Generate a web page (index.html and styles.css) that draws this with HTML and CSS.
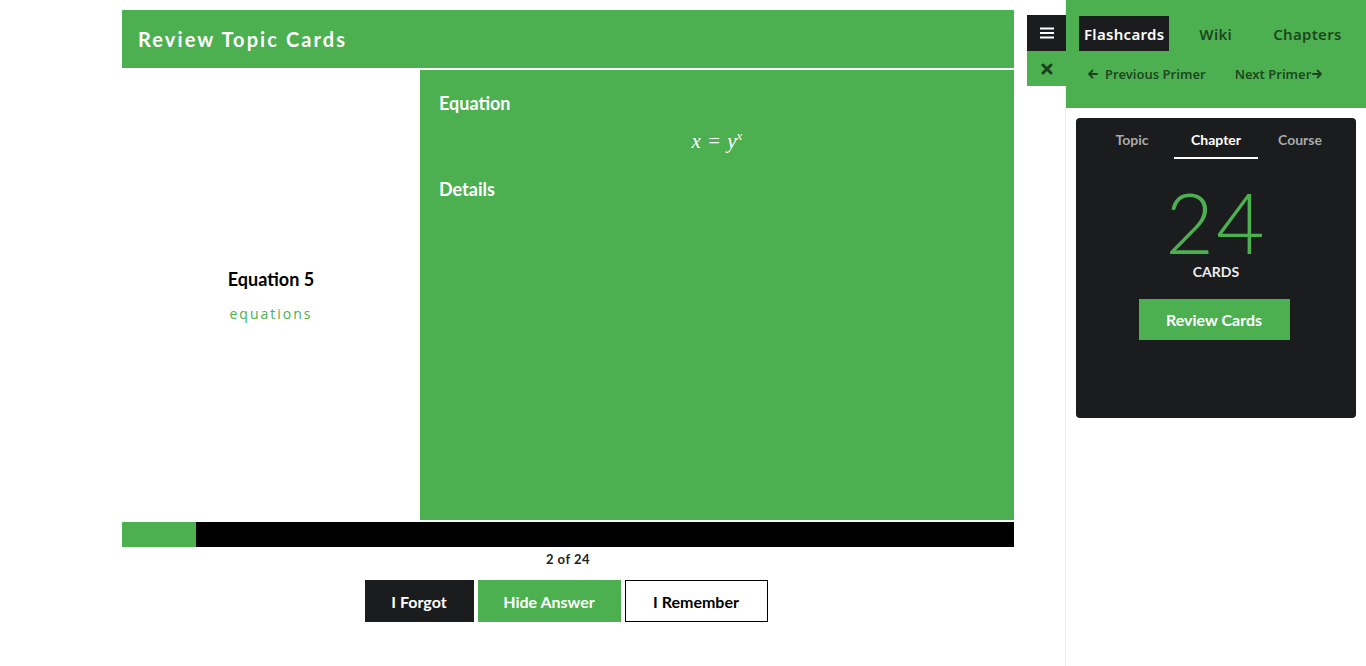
FILE: index.html
```html
<!DOCTYPE html>
<html>
<head>
<meta charset="utf-8">
<link rel="stylesheet" href="styles.css">
</head>
<body>
<div class="page">
  <main class="main">
    <div class="header"><h1>Review Topic Cards</h1></div>
    <div class="card">
      <div class="front">
        <div class="card-title">Equation 5</div>
        <div class="card-tag">equations</div>
      </div>
      <div class="back">
        <div class="label">Equation</div>
        <div class="math"><i>x</i> = <i>y</i><sup><i>x</i></sup></div>
        <div class="label details">Details</div>
      </div>
    </div>
    <div class="progress"><div class="fill" style="width:8.33%"></div></div>
    <div class="count">2 of 24</div>
    <div class="actions">
      <button class="btn dark">I Forgot</button>
      <button class="btn green">Hide Answer</button>
      <button class="btn outline">I Remember</button>
    </div>
  </main>
  <aside class="sidebar">
    <div class="toggles">
      <div class="tg menu"><svg width="14" height="12" viewBox="0 0 14 12"><rect x="0" y="0.5" width="14" height="2" fill="#fff"/><rect x="0" y="5" width="14" height="2" fill="#fff"/><rect x="0" y="9.5" width="14" height="2" fill="#fff"/></svg></div>
      <div class="tg close"><svg width="12" height="12" viewBox="0 0 12 12"><path d="M2 2 L10 10 M10 2 L2 10" stroke="#1e3f1f" stroke-width="3" stroke-linecap="round"/></svg></div>
    </div>
    <div class="side-head">
      <nav class="tabs">
        <span class="tab active">Flashcards</span>
        <span class="tab">Wiki</span>
        <span class="tab">Chapters</span>
      </nav>
      <div class="primers">
        <span class="primer"><svg class="arr" width="11" height="10" viewBox="0 0 11 10"><path d="M10 5 H2 M5.5 1.5 L2 5 L5.5 8.5" fill="none" stroke="currentColor" stroke-width="1.8" stroke-linecap="round" stroke-linejoin="round"/></svg>Previous Primer</span>
        <span class="primer">Next Primer<svg class="arr r" width="11" height="10" viewBox="0 0 11 10"><path d="M1 5 H9 M5.5 1.5 L9 5 L5.5 8.5" fill="none" stroke="currentColor" stroke-width="1.8" stroke-linecap="round" stroke-linejoin="round"/></svg></span>
      </div>
    </div>
    <div class="panel">
      <div class="ptabs">
        <span class="ptab">Topic</span>
        <span class="ptab active">Chapter</span>
        <span class="ptab">Course</span>
      </div>
      <div class="big">24</div>
      <div class="cards-label">CARDS</div>
      <button class="review">Review Cards</button>
    </div>
  </aside>
</div>
</body>
</html>
```
FILE: styles.css
```css
* { box-sizing: border-box; }
html, body { margin: 0; padding: 0; background: #fff; }
body { font-family: "Lato", "Noto Sans", sans-serif; color: #000; }
.page { display: flex; height: 666px; overflow: hidden; }
.main { width: 1065px; padding: 10px 51px 0 122px; }
.header { background: #4caf50; height: 58px; display: flex; align-items: center; padding-left: 16px; }
.header h1 { margin: 0; color: #fff; font-size: 20px; font-weight: 700; letter-spacing: 2.1px; }
.card { display: flex; height: 450px; margin-top: 2px; }
.front { width: 298px; display: flex; flex-direction: column; align-items: center; justify-content: center; }
.card-title { font-size: 18px; font-weight: 700; }
.card-tag { font-family: "Open Sans", sans-serif; font-size: 14px; color: #4caf50; letter-spacing: 2px; margin-top: 14px; }
.back { flex: 1; background: #4caf50; color: #fff; padding: 22px 19px; }
.label { font-size: 18px; font-weight: 700; }
.math { text-align: center; font-family: "Liberation Serif", serif; font-size: 21px; margin-top: 14px; word-spacing: 2px; }
.math sup { font-size: 13px; }
.details { margin-top: 24px; }
.progress { height: 25px; background: #000; margin-top: 2px; }
.fill { height: 100%; background: #4caf50; }
.count { text-align: center; font-size: 13px; font-weight: 700; margin-top: 4px; color: #222; letter-spacing: 0.5px; }
.actions { display: flex; justify-content: center; gap: 4px; margin-top: 13px; padding-right: 4px; }
.btn { font-family: "Lato", sans-serif; font-size: 16px; font-weight: 700; height: 42px; border: 0; padding: 0 20px; }
.btn.dark { background: #1b1c1e; color: #fff; width: 109px; }
.btn.green { background: #4caf50; color: #fff; width: 143px; }
.btn.outline { background: #fff; color: #000; border: 1px solid #000; width: 143px; }
.sidebar { width: 301px; position: relative; border-left: 1px solid #eee; }
.toggles { position: absolute; left: -39px; top: 15px; width: 39px; }
.tg { height: 36px; display: flex; align-items: center; justify-content: center; }
.tg.menu { background: #1b1c1e; }
.tg.close { background: #4caf50; height: 35px; }
.side-head { background: #4caf50; height: 108px; padding: 16px 0 0 13px; }
.tabs { display: flex; align-items: center; }
.tab { font-family: "Noto Sans", sans-serif; font-size: 15px; font-weight: 600; color: rgba(0,0,0,0.62); height: 35px; display: flex; align-items: center; padding: 0 5px; letter-spacing: 0.3px; }
.tab.active { background: #1b1c1e; color: #fff; }
.tab:nth-child(2) { margin-left: 25px; }
.tab:nth-child(3) { margin-left: 31px; }
.primers { display: flex; margin-top: 14px; padding-left: 8px; }
.primer { font-family: "Noto Sans", sans-serif; font-size: 13px; font-weight: 600; color: rgba(0,0,0,0.62); display: flex; align-items: center; }
.arr { margin-right: 7px; }
.arr.r { margin-right: 0; margin-left: 1px; }
.primer + .primer { margin-left: 29px; }
.panel { margin: 10px 10px 0 10px; background: #1b1c1e; border-radius: 4px; height: 300px; display: flex; flex-direction: column; align-items: center; }
.ptabs { display: flex; width: 100%; justify-content: center; padding-top: 13px; }
.ptab { font-size: 14px; font-weight: 700; color: #aaa; padding: 0 0 9px; width: 84px; text-align: center; border-bottom: 2px solid transparent; }
.ptab.active { color: #fff; border-bottom-color: #fff; }
.big { font-size: 84px; font-weight: 300; color: #4caf50; line-height: 72px; margin-top: 27px; letter-spacing: 2px; }
.cards-label { color: #eee; font-size: 14px; font-weight: 700; margin-top: 5px; }
.review { background: #4caf50; color: #fff; border: 0; font-family: "Lato", sans-serif; font-size: 16px; font-weight: 700; width: 151px; height: 41px; margin-top: 19px; margin-right: 4px; }
```
